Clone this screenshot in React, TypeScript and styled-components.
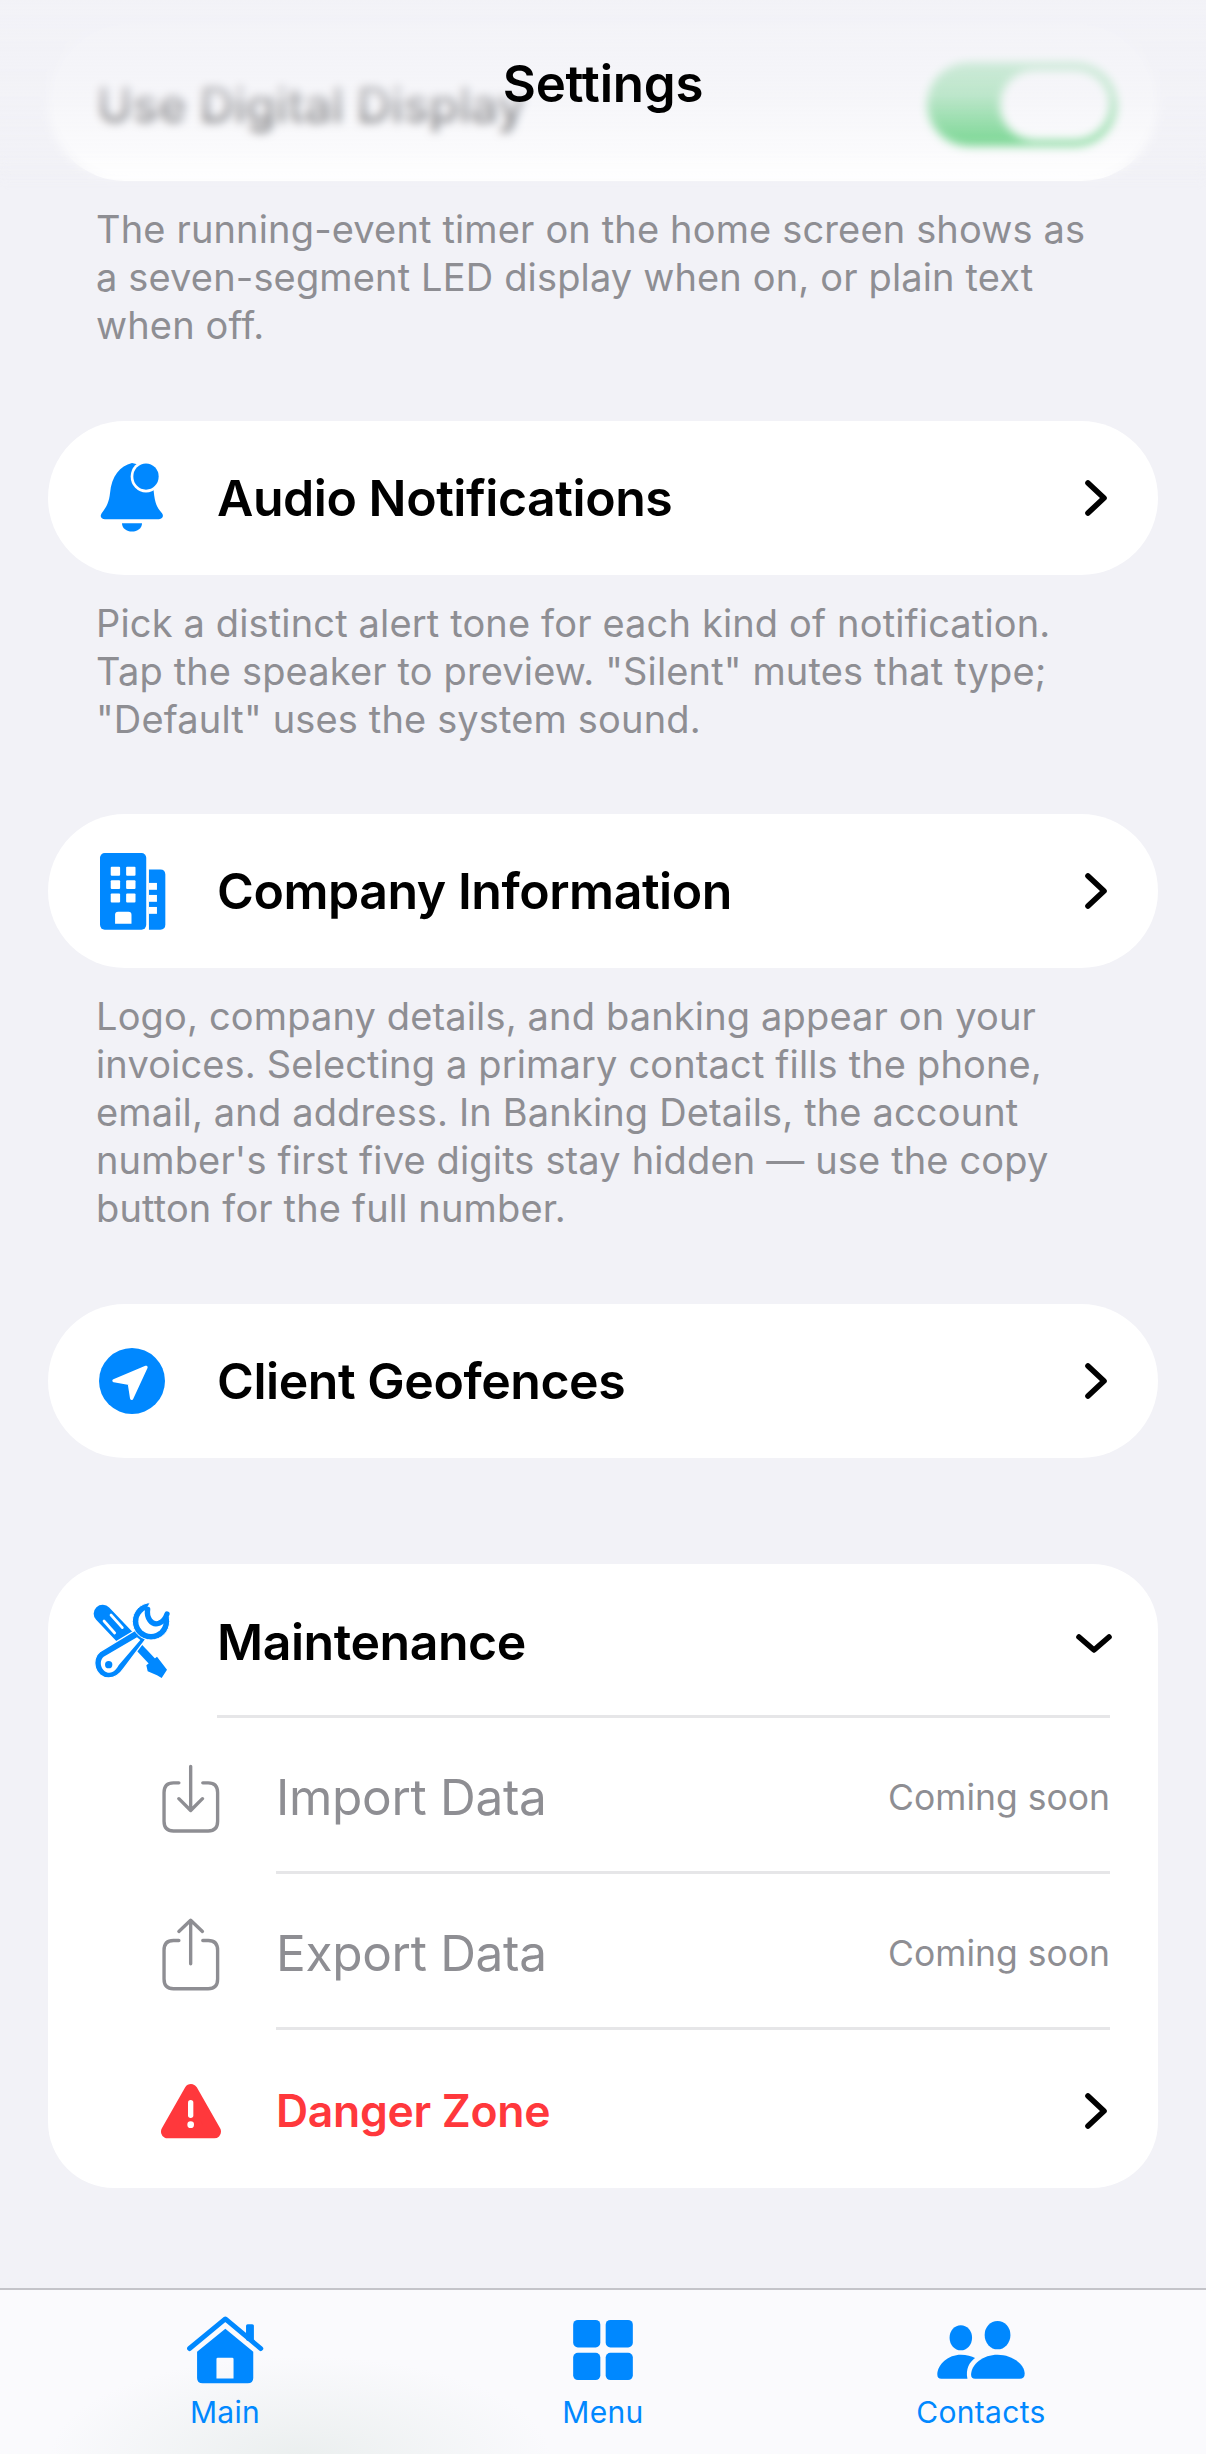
import styled, { createGlobalStyle } from "styled-components";

const BLUE = "#0088ff";
const GRAY = "#8e8e93";
const RED = "#ff383c";

const GlobalStyle = createGlobalStyle`
  html, body {
    margin: 0;
    padding: 0;
    background: #f2f2f7;
  }
  * {
    box-sizing: border-box;
  }
  svg {
    flex: none;
  }
`;

const Screen = styled.div`
  position: relative;
  width: 1206px;
  height: 2454px;
  overflow: hidden;
  background: #f2f2f7;
  font-family: Inter, "Liberation Sans", sans-serif;
  color: #000;
`;

const Content = styled.main`
  display: flex;
  flex-direction: column;
  padding: 27px 48px 0;
`;

const Card = styled.section`
  background: #fff;
  border-radius: 77px;
`;

const GroupCard = styled(Card)`
  margin-top: 106px;
  border-radius: 66px;
  padding-bottom: 2px;
`;

const Row = styled.div<{ $indent?: number }>`
  display: flex;
  align-items: stretch;
  height: ${(p) => (p.$indent ? 156 : 154)}px;
  padding-top: ${(p) => (p.$indent ? 6 : 0)}px;
  padding-left: ${(p) => p.$indent ?? 48}px;
  padding-right: 48px;
`;

const IconSlot = styled.div`
  flex: none;
  width: 72px;
  margin-right: 49px;
  display: flex;
  align-items: center;
  justify-content: center;
`;

const RowBody = styled.div<{ $line?: boolean }>`
  flex: 1;
  display: flex;
  align-items: center;
  justify-content: space-between;
  border-bottom: ${(p) => (p.$line ? "3px solid #e6e6e8" : "none")};
`;

const HeaderBody = styled(RowBody)`
  padding-top: 6px;
`;

const Title = styled.span`
  font-size: 50px;
  font-weight: 600;
  letter-spacing: -0.45px;
  white-space: nowrap;
`;

const MutedTitle = styled.span`
  font-size: 49.5px;
  font-weight: 400;
  color: ${GRAY};
  letter-spacing: -0.3px;
`;

const DangerTitle = styled.span`
  font-size: 44.5px;
  font-weight: 600;
  color: ${RED};
  letter-spacing: -0.3px;
`;

const Note = styled.span`
  font-size: 35.5px;
  color: ${GRAY};
  letter-spacing: 0;
`;

const Caption = styled.p`
  margin: 0;
  padding: 24px 48px 71.5px;
  font-size: 38px;
  line-height: 48px;
  letter-spacing: 0.15px;
  color: ${GRAY};
  white-space: nowrap;
`;

const ToggleRow = styled(Row)`
  justify-content: space-between;
  align-items: center;
  padding: 0 41px 0 49px;
`;

const BlurLabel = styled.span`
  font-size: 48px;
  font-weight: 500;
  color: #000;
`;

const Toggle = styled.div`
  position: relative;
  width: 190px;
  height: 84px;
  border-radius: 42px;
  background: #34c759;
`;

const Knob = styled.div`
  position: absolute;
  top: 8px;
  right: 7px;
  width: 110px;
  height: 70px;
  border-radius: 35px;
  background: #fff;
`;

const TopVeil = styled.div`
  position: absolute;
  top: 0;
  left: 0;
  right: 0;
  height: 190px;
  backdrop-filter: blur(5px);
  background: linear-gradient(
    rgba(242, 242, 247, 0.97) 0%,
    rgba(242, 242, 247, 0.72) 50%,
    rgba(242, 242, 247, 0.3) 82%,
    rgba(242, 242, 247, 0.05) 100%
  );
  -webkit-mask-image: linear-gradient(#000 80%, transparent 100%);
  mask-image: linear-gradient(#000 80%, transparent 100%);
`;

const NavTitle = styled.h1`
  position: absolute;
  top: 54px;
  left: 0;
  right: 0;
  margin: 0;
  text-align: center;
  font-size: 51px;
  line-height: 60px;
  font-weight: 600;
  letter-spacing: -0.2px;
`;

const TabBar = styled.nav`
  position: absolute;
  left: 0;
  right: 0;
  bottom: 0;
  height: 166px;
  padding: 26px 36px 0;
  display: grid;
  grid-template-columns: repeat(3, 1fr);
  border-top: 2px solid #c4c4c9;
  background:
    radial-gradient(ellipse 250px 100px at 300px 166px, #ebefef 0%, rgba(235, 239, 239, 0) 100%),
    #fafafd;
`;

const Tab = styled.div`
  display: flex;
  flex-direction: column;
  align-items: center;
  color: ${BLUE};
`;

const TabIcon = styled.div`
  height: 68px;
  display: flex;
  align-items: center;
  justify-content: center;
`;

const TabLabel = styled.span`
  margin-top: 10px;
  font-size: 30px;
  line-height: 36px;
  font-weight: 400;
  letter-spacing: 0.3px;
`;

const DownSvg = styled.svg`
  margin-right: -3px;
  margin-top: 4px;
`;

const ChevronRight = () => (
  <svg width="27" height="42" viewBox="0 0 27 42" fill="none">
    <path d="M5 6 L21 21 L5 36" stroke="#000" strokeWidth="5.6" strokeLinecap="round" strokeLinejoin="round" />
  </svg>
);

const ChevronDown = () => (
  <DownSvg width="38" height="24" viewBox="0 0 38 24" fill="none">
    <path d="M4 5 L19 18 L34 5" stroke="#000" strokeWidth="5.6" strokeLinecap="round" strokeLinejoin="round" />
  </DownSvg>
);

const BellIcon = () => (
  <svg width="65" height="71" viewBox="120 100 195 205" preserveAspectRatio="none">
    <path
      fill={BLUE}
      d="M216 103 C180 112 155 140 150 190 C147 220 135 235 125 248 C118 258 125 265 135 265 L297 265 C308 265 312 256 306 248 C295 235 283 225 280 170 C275 135 250 108 216 103 Z"
    />
    <path fill={BLUE} d="M186 277 L246 277 C246 292 232 301 216 301 C200 301 186 292 186 277 Z" />
    <circle cx="258" cy="142" r="46" fill="#fff" />
    <circle cx="258" cy="142" r="38" fill={BLUE} />
  </svg>
);

const BuildingIcon = () => (
  <svg width="67" height="79" viewBox="115 1225 200 230" preserveAspectRatio="none">
    <rect x="118" y="1228" width="138" height="223" rx="14" fill={BLUE} />
    <path fill={BLUE} d="M264 1276 H298 Q313 1276 313 1291 V1436 Q313 1451 298 1451 H264 Z" />
    <g fill="#fff">
      <rect x="150" y="1268" width="28" height="26" rx="3" />
      <rect x="196" y="1268" width="28" height="26" rx="3" />
      <rect x="150" y="1307" width="28" height="26" rx="3" />
      <rect x="196" y="1307" width="28" height="26" rx="3" />
      <rect x="150" y="1346" width="28" height="26" rx="3" />
      <rect x="196" y="1346" width="28" height="26" rx="3" />
      <path d="M163 1434 V1408 Q163 1399 172 1399 H203 Q212 1399 212 1408 V1434 Z" />
      <rect x="264" y="1315" width="24" height="20" />
      <rect x="264" y="1350" width="24" height="20" />
      <rect x="264" y="1385" width="24" height="20" />
    </g>
  </svg>
);

const LocationIcon = () => (
  <svg width="66" height="66" viewBox="117 143 198 198">
    <circle cx="216" cy="242" r="99" fill={BLUE} />
    <path
      d="M258 201 L162 241 L208 249 L215 294 Z"
      fill="#fff"
      stroke="#fff"
      strokeWidth="10"
      strokeLinejoin="round"
    />
  </svg>
);

const ToolsIcon = () => (
  <svg width="78" height="77" viewBox="98 910 234 231">
    {/* screwdriver */}
    <line x1="127" y1="945" x2="205" y2="1027" stroke={BLUE} strokeWidth="54" strokeLinecap="round" />
    <g stroke="#fff" strokeWidth="8" strokeLinecap="round">
      <line x1="131" y1="967" x2="163" y2="1003" />
      <line x1="152" y1="949" x2="186" y2="987" />
    </g>
    <line x1="235" y1="1045" x2="285" y2="1098" stroke={BLUE} strokeWidth="24" />
    <path fill={BLUE} d="M258 1100 L290 1074 L320 1113 L304 1138 L290 1130 L262 1118 Z" />
    {/* wrench */}
    <path
      fill={BLUE}
      stroke="#fff"
      strokeWidth="4"
      d="M226 994 L120 1058 C88 1082 104 1138 145 1138 C165 1138 180 1125 190 1110 L256 1022 Z"
    />
    <path fill="#fff" d="M230 1016 L130 1074 C112 1090 125 1122 147 1122 C160 1122 170 1110 175 1100 L240 1024 Z" />
    <circle cx="145" cy="1098" r="11" fill={BLUE} />
    <circle cx="272" cy="968" r="56" fill={BLUE} stroke="#fff" strokeWidth="3" />
    <circle cx="272" cy="968" r="38" fill="#fff" />
    <path fill="#fff" d="M258 930 L272 905 L340 925 L335 945 L304 968 Z" />
    <path
      fill="none"
      stroke={BLUE}
      strokeWidth="16"
      strokeLinecap="round"
      d="M262 932 C258 955 272 982 296 974 C306 970 316 958 320 946"
    />
  </svg>
);

const ImportIcon = () => (
  <svg width="62" height="72" viewBox="92 106 184 210" fill="none" stroke={GRAY} strokeWidth="10" strokeLinecap="round" strokeLinejoin="round">
    <path d="M148 163 H132 Q104 163 104 192 V277 Q104 306 132 306 H235 Q263 306 263 277 V192 Q263 163 235 163 H219" />
    <path d="M183 114 V243 M148 210 L183 245 L218 210" />
  </svg>
);

const ExportIcon = () => (
  <svg width="62" height="76" viewBox="92 568 184 224" fill="none" stroke={GRAY} strokeWidth="10" strokeLinecap="round" strokeLinejoin="round">
    <path d="M148 637 H132 Q104 637 104 666 V751 Q104 780 132 780 H235 Q263 780 263 751 V666 Q263 637 235 637 H219" />
    <path d="M183 706 V579 M148 610 L183 577 L218 610" />
  </svg>
);

const WarningIcon = () => (
  <svg width="62" height="56" viewBox="94 1055 184 168">
    <path d="M186 1078 L116 1201 L256 1201 Z" fill={RED} stroke={RED} strokeWidth="40" strokeLinejoin="round" />
    <rect x="177" y="1106" width="16" height="54" rx="8" fill="#fff" />
    <circle cx="185" cy="1180" r="10" fill="#fff" />
  </svg>
);

const HomeIcon = () => (
  <svg width="78" height="68" viewBox="48 43 236 207" fill={BLUE}>
    <rect x="230" y="68" width="24" height="50" rx="5" />
    <path d="M58 142 L167 52 L275 142" fill="none" stroke={BLUE} strokeWidth="15" strokeLinecap="round" strokeLinejoin="round" />
    <path
      fillRule="evenodd"
      d="M167 82 L252 152 V232 Q252 248 235 248 H98 Q81 248 81 232 V152 Z M144 170 H188 Q192 170 192 174 V233 H140 V174 Q140 170 144 170 Z"
    />
  </svg>
);

const GridIcon = () => (
  <svg width="60" height="60" viewBox="99 58 178 179" fill={BLUE}>
    <rect x="99" y="58" width="81" height="82" rx="14" />
    <rect x="196" y="58" width="81" height="82" rx="14" />
    <rect x="99" y="156" width="81" height="81" rx="14" />
    <rect x="196" y="156" width="81" height="81" rx="14" />
  </svg>
);

const PeopleIcon = () => (
  <svg width="88" height="60" viewBox="1190 54 266 178" fill={BLUE}>
    <ellipse cx="1262" cy="106" rx="34" ry="38" />
    <ellipse cx="1373" cy="98" rx="39" ry="43" />
    <path d="M1293 218 C1293 185 1330 157 1373 157 C1416 157 1455 185 1455 215 Q1455 230 1440 230 H1305 Q1293 230 1293 218 Z" />
    <path d="M1191 218 C1191 185 1225 157 1262 157 C1280 157 1295 161 1305 167 C1288 180 1276 200 1282 230 H1203 Q1191 230 1191 218 Z" />
  </svg>
);

const links = [
  {
    title: "Audio Notifications",
    icon: <BellIcon />,
    lines: [
      "Pick a distinct alert tone for each kind of notification.",
      'Tap the speaker to preview. "Silent" mutes that type;',
      '"Default" uses the system sound.',
    ],
  },
  {
    title: "Company Information",
    icon: <BuildingIcon />,
    lines: [
      "Logo, company details, and banking appear on your",
      "invoices. Selecting a primary contact fills the phone,",
      "email, and address. In Banking Details, the account",
      "number's first five digits stay hidden — use the copy",
      "button for the full number.",
    ],
  },
];

const renderLines = (lines: string[]) =>
  lines.map((line, index) => (
    <span key={index}>
      {line}
      {index < lines.length - 1 && <br />}
    </span>
  ));

export default function App() {
  return (
    <Screen>
      <GlobalStyle />
      <Content>
        <Card>
          <ToggleRow>
            <BlurLabel>Use Digital Display</BlurLabel>
            <Toggle>
              <Knob />
            </Toggle>
          </ToggleRow>
        </Card>
        <Caption>
          {renderLines([
            "The running-event timer on the home screen shows as",
            "a seven-segment LED display when on, or plain text",
            "when off.",
          ])}
        </Caption>

        {links.map((link) => (
          <div key={link.title}>
            <Card>
              <Row>
                <IconSlot>{link.icon}</IconSlot>
                <RowBody>
                  <Title>{link.title}</Title>
                  <ChevronRight />
                </RowBody>
              </Row>
            </Card>
            <Caption>{renderLines(link.lines)}</Caption>
          </div>
        ))}

        <Card>
          <Row>
            <IconSlot>
              <LocationIcon />
            </IconSlot>
            <RowBody>
              <Title>Client Geofences</Title>
              <ChevronRight />
            </RowBody>
          </Row>
        </Card>

        <GroupCard>
          <Row>
            <IconSlot>
              <ToolsIcon />
            </IconSlot>
            <HeaderBody $line>
              <Title>Maintenance</Title>
              <ChevronDown />
            </HeaderBody>
          </Row>
          <Row $indent={107}>
            <IconSlot>
              <ImportIcon />
            </IconSlot>
            <RowBody $line>
              <MutedTitle>Import Data</MutedTitle>
              <Note>Coming soon</Note>
            </RowBody>
          </Row>
          <Row $indent={107}>
            <IconSlot>
              <ExportIcon />
            </IconSlot>
            <RowBody $line>
              <MutedTitle>Export Data</MutedTitle>
              <Note>Coming soon</Note>
            </RowBody>
          </Row>
          <Row $indent={107}>
            <IconSlot>
              <WarningIcon />
            </IconSlot>
            <RowBody>
              <DangerTitle>Danger Zone</DangerTitle>
              <ChevronRight />
            </RowBody>
          </Row>
        </GroupCard>
      </Content>

      <TopVeil />
      <NavTitle>Settings</NavTitle>

      <TabBar>
        <Tab>
          <TabIcon>
            <HomeIcon />
          </TabIcon>
          <TabLabel>Main</TabLabel>
        </Tab>
        <Tab>
          <TabIcon>
            <GridIcon />
          </TabIcon>
          <TabLabel>Menu</TabLabel>
        </Tab>
        <Tab>
          <TabIcon>
            <PeopleIcon />
          </TabIcon>
          <TabLabel>Contacts</TabLabel>
        </Tab>
      </TabBar>
    </Screen>
  );
}
